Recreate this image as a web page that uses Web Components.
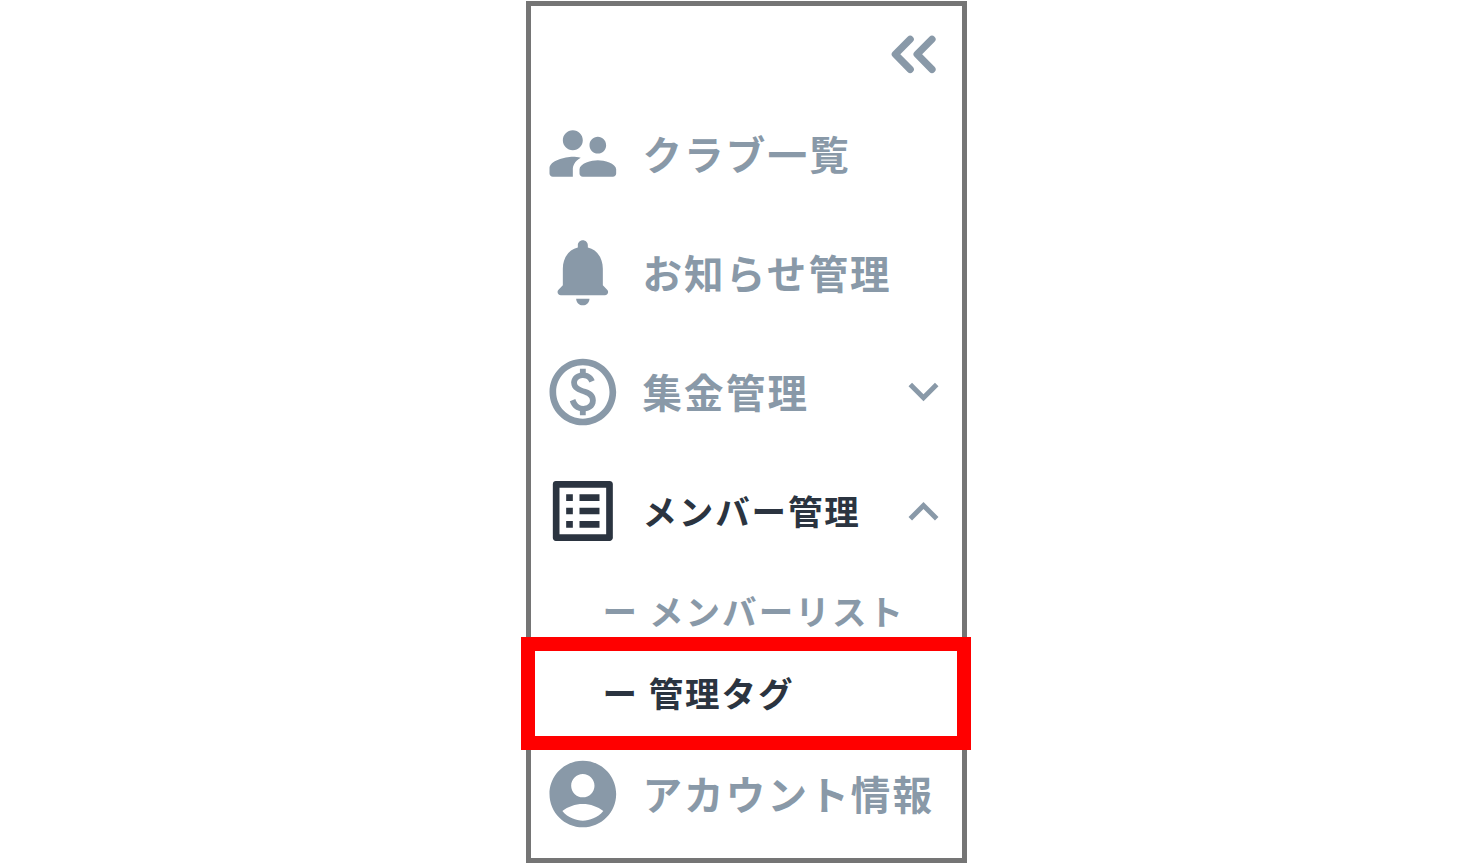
<!DOCTYPE html>
<html lang="ja">
<head>
<meta charset="utf-8">
<title>メニュー</title>
<style>
    body {
        margin: 0;
        height: 864px;
        overflow: hidden;
        background: #fff;
        font-family: "Noto Sans CJK JP", sans-serif;
        font-weight: bold;
        --color-muted: #8999a8;
        --color-active: #2b3440;
    }
</style>
</head>
<body>
<side-menu>
    <menu-item icon="people">クラブ一覧</menu-item>
    <menu-item icon="bell">お知らせ管理</menu-item>
    <menu-item icon="paid" arrow="down">集金管理</menu-item>
    <menu-item icon="list" arrow="up" class="active">メンバー管理</menu-item>
    <sub-item>メンバーリスト</sub-item>
    <sub-item class="active marked">管理タグ</sub-item>
    <menu-item icon="account" class="last">アカウント情報</menu-item>
</side-menu>

<script>
const ICONS = {
    people: 'M16.5 12c1.38 0 2.49-1.12 2.49-2.5S17.88 7 16.5 7 14 8.12 14 9.5s1.12 2.5 2.5 2.5zM9 11c1.66 0 2.99-1.34 2.99-3S10.66 5 9 5 6 6.34 6 8s1.34 3 3 3zm7.5 3c-1.83 0-5.5.92-5.5 2.75V18c0 .55.45 1 1 1h9c.55 0 1-.45 1-1v-1.25c0-1.83-3.67-2.75-5.5-2.75zM9 13c-2.33 0-7 1.17-7 3.5V18c0 .55.45 1 1 1h6v-2.25c0-.85.33-2.34 2.37-3.47C10.5 13.1 9.66 13 9 13z',
    bell: 'M12 22c1.1 0 2-.9 2-2h-4c0 1.1.89 2 2 2zm6-6v-5c0-3.07-1.64-5.64-4.5-6.32V4c0-.83-.67-1.5-1.5-1.5s-1.5.67-1.5 1.5v.68C7.63 5.36 6 7.92 6 11v5l-1.29 1.29c-.63.63-.19 1.71.7 1.71h13.17c.89 0 1.34-1.08.71-1.71L18 16z',
    paid: 'M12 2C6.48 2 2 6.48 2 12s4.48 10 10 10 10-4.48 10-10S17.52 2 12 2zm0 18c-4.41 0-8-3.59-8-8s3.59-8 8-8 8 3.59 8 8-3.59 8-8 8zm.89-8.9c-1.78-.59-2.64-.96-2.64-1.9 0-1.02 1.11-1.39 1.81-1.39 1.31 0 1.79.99 1.9 1.34l1.58-.67c-.15-.44-.82-1.91-2.66-2.23V5h-1.75v1.26c-2.6.56-2.62 2.85-2.62 2.96 0 2.27 2.25 2.91 3.35 3.31 1.58.56 2.28 1.07 2.28 2.03 0 1.13-1.05 1.61-1.98 1.61-1.82 0-2.34-1.87-2.4-2.09l-1.66.67c.63 2.19 2.28 2.78 3.02 2.96V19h1.75v-1.24c.52-.09 3.02-.59 3.02-3.22.01-1.39-.6-2.61-3-3.44z',
    list: 'M19 5v14H5V5h14m1.1-2H3.9c-.5 0-.9.4-.9.9v16.2c0 .4.4.9.9.9h16.2c.4 0 .9-.5.9-.9V3.9c0-.5-.5-.9-.9-.9zM11 7h6v2h-6V7zm0 4h6v2h-6v-2zm0 4h6v2h-6zM7 7h2v2H7zm0 4h2v2H7zm0 4h2v2H7z',
    account: 'M12 2C6.48 2 2 6.48 2 12s4.48 10 10 10 10-4.48 10-10S17.52 2 12 2zm0 4c1.93 0 3.5 1.57 3.5 3.5S13.93 13 12 13s-3.5-1.57-3.5-3.5S10.07 6 12 6zm0 14c-2.03 0-4.43-.82-6.14-2.88C7.55 15.8 9.68 15 12 15s4.45.8 6.14 2.12C16.43 19.18 14.03 20 12 20z'
};

const ARROWS = {
    down: 'M10.59.3 6 4.88 1.41.3 0 1.71l6 6 6-6z',
    up: 'M6 0 0 6l1.41 1.41L6 2.83l4.59 4.58L12 6z'
};

class SideMenu extends HTMLElement {
    constructor() {
        super();
        this.attachShadow({mode: 'open'});
        this.shadowRoot.innerHTML = `
            <style>
                :host {
                    display: flex;
                    flex-direction: column;
                    box-sizing: border-box;
                    width: 441px;
                    height: 862px;
                    margin: 1px 0 0 526px;
                    border: 5px solid #757575;
                    background: #fff;
                }
                header {
                    display: flex;
                    justify-content: flex-end;
                    box-sizing: border-box;
                    height: 87.45px;
                    padding: 29px 26px 0 0;
                    flex: none;
                }
                svg {
                    display: block;
                    fill: none;
                    stroke: var(--color-muted);
                    stroke-width: 7.2;
                    stroke-linecap: round;
                    stroke-linejoin: round;
                }
            </style>
            <header>
                <svg width="45" height="39" viewBox="0 0 45 39">
                    <path d="M19.2 4.2 4.3 19.3l14.9 15.1M41 4.2 26.1 19.3 41 34.4"/>
                </svg>
            </header>
            <slot></slot>
        `;
    }
}

class MenuItem extends HTMLElement {
    constructor() {
        super();
        this.attachShadow({mode: 'open'});
    }

    connectedCallback() {
        const icon = this.getAttribute('icon');
        const arrow = this.getAttribute('arrow');
        // the people glyph is set a touch lower than the others
        const top = icon === 'people' ? -0.15 : 0;
        this.shadowRoot.innerHTML = `
            <style>
                :host {
                    display: flex;
                    align-items: center;
                    flex: none;
                    height: 119.3px;
                    padding: 0 23.5px 0 11.7px;
                    color: var(--color-muted);
                    font-size: 39.5px;
                    line-height: 1;
                    letter-spacing: 2.2px;
                    white-space: nowrap;
                }
                :host(.active) {
                    color: var(--color-active);
                    font-size: 34.5px;
                    letter-spacing: 1.9px;
                }
                svg {
                    display: block;
                    flex: none;
                    fill: currentColor;
                    overflow: visible;
                }
                .label {
                    flex: 1;
                    margin-left: 19.7px;
                    padding-bottom: 1.2px;
                }
                :host(.last) .label {
                    padding-bottom: 2.6px;
                }
                .arrow {
                    color: var(--color-muted);
                }
            </style>
            <svg width="80" height="80" viewBox="0.05 ${top} 24 24"><path d="${ICONS[icon]}"/></svg>
            <span class="label"><slot></slot></span>
            ${arrow ? `<svg class="arrow" width="30" height="18.5" viewBox="0.2 0 12 7.41"><path d="${ARROWS[arrow]}"/></svg>` : ''}
        `;
    }
}

class SubItem extends HTMLElement {
    constructor() {
        super();
        this.attachShadow({mode: 'open'});
        this.shadowRoot.innerHTML = `
            <style>
                :host {
                    display: flex;
                    align-items: center;
                    flex: none;
                    position: relative;
                    box-sizing: border-box;
                    height: 82px;
                    padding: 0 0 2.6px 71.5px;
                    color: var(--color-muted);
                    font-size: 34.5px;
                    line-height: 1;
                    letter-spacing: 2.1px;
                    white-space: nowrap;
                }
                :host(.active) {
                    color: var(--color-active);
                    letter-spacing: 1.9px;
                }
                .dash {
                    margin-right: 9.8px;
                }
                /* red frame, runs over the border of the menu */
                :host(.marked)::after {
                    content: '';
                    position: absolute;
                    top: -16px;
                    right: -9px;
                    bottom: -15px;
                    left: -10px;
                    border: 14px solid #f00;
                }
            </style>
            <span class="dash">ー</span>
            <span><slot></slot></span>
        `;
    }
}

customElements.define('side-menu', SideMenu);
customElements.define('menu-item', MenuItem);
customElements.define('sub-item', SubItem);
</script>
</body>
</html>
